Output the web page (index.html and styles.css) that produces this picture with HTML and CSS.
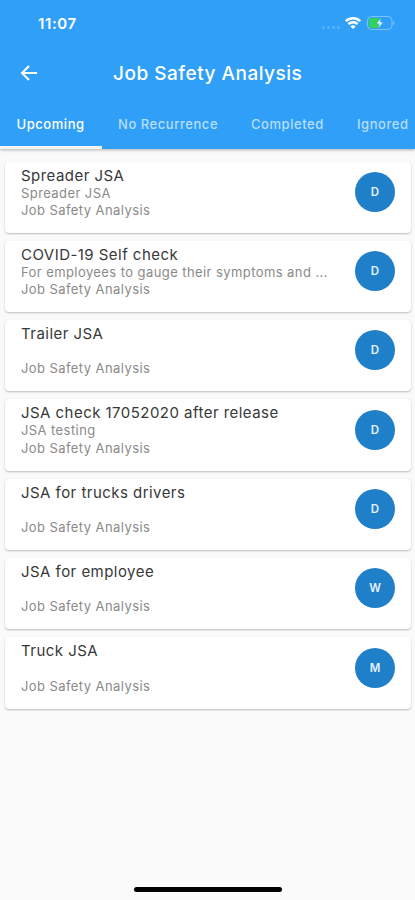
FILE: index.html
```html
<!DOCTYPE html>
<html lang="en">
<head>
<meta charset="utf-8">
<meta name="viewport" content="width=device-width, initial-scale=1">
<title>Job Safety Analysis</title>
<link rel="stylesheet" href="styles.css">
</head>
<body>
<div class="screen">
  <header class="header">
    <div class="status">
      <span class="time">11:07</span>
      <div class="status-icons">
        <div class="signal"><i></i><i></i><i></i><i></i></div>
        <svg class="wifi" width="16" height="12" viewBox="0 0 16 12" fill="none" stroke="#fff" stroke-width="2.4">
          <path d="M.8 4.2a10.2 10.2 0 0 1 14.4 0"/>
          <path d="M3.4 7.200a6.5 6.5 0 0 1 9.2 0"/>
          <path d="M8 12 5.400 9.500a3.4 3.4 0 0 1 5.200 0Z" fill="#fff" stroke="none"/>
        </svg>
        <svg class="battery" width="28" height="14" viewBox="0 0 28 14">
          <rect x=".5" y=".5" width="24.500" height="13" rx="4" fill="none" stroke="#7fc2f9" stroke-width="1"/>
          <path d="M26 5v4c1.900-.7 1.900-3.300 0-4Z" fill="#7fc2f9"/>
          <path d="M4.200 2H12v10H4.200A2.200 2.200 0 0 1 2 9.800V4.200A2.200 2.200 0 0 1 4.200 2Z" fill="#32d15b"/>
          <path d="M13.800 2.200 9.600 7.700h2.700l-.9 4.400 4.600-5.900h-2.900Z" fill="#fff" stroke="#2f9ff8" stroke-width=".4"/>
        </svg>
      </div>
    </div>
    <div class="appbar">
      <svg class="back" width="18" height="16" viewBox="0 0 18 16" fill="none" stroke="#fff" stroke-width="2">
        <path d="M17 8H2M9 1 2 8l7 7"/>
      </svg>
      <h1>Job Safety Analysis</h1>
    </div>
    <nav class="tabs">
      <span class="tab active">Upcoming</span>
      <span class="tab recurrence">No Recurrence</span>
      <span class="tab completed">Completed</span>
      <span class="tab ignored">Ignored</span>
    </nav>
  </header>
  <main class="list">
    <article class="card"><div class="text"><h2>Spreader JSA</h2><p>Spreader JSA</p><p>Job Safety Analysis</p></div><span class="avatar">D</span></article>
    <article class="card"><div class="text"><h2>COVID-19 Self check</h2><p>For employees to gauge their symptoms and ...</p><p>Job Safety Analysis</p></div><span class="avatar">D</span></article>
    <article class="card"><div class="text"><h2>Trailer JSA</h2><p></p><p>Job Safety Analysis</p></div><span class="avatar">D</span></article>
    <article class="card"><div class="text"><h2>JSA check 17052020 after release</h2><p>JSA testing</p><p>Job Safety Analysis</p></div><span class="avatar">D</span></article>
    <article class="card"><div class="text"><h2>JSA for trucks drivers</h2><p></p><p>Job Safety Analysis</p></div><span class="avatar">D</span></article>
    <article class="card"><div class="text"><h2>JSA for employee</h2><p></p><p>Job Safety Analysis</p></div><span class="avatar">W</span></article>
    <article class="card"><div class="text"><h2>Truck JSA</h2><p></p><p>Job Safety Analysis</p></div><span class="avatar">M</span></article>
  </main>
  <div class="home"></div>
</div>
</body>
</html>
```
FILE: styles.css
```css
* { box-sizing: border-box; }
body { margin: 0; font-family: Inter, "Liberation Sans", sans-serif; }
h1, h2, p { margin: 0; font-weight: 400; white-space: nowrap; }
.screen {
  width: 415px;
  height: 900px;
  display: flex;
  flex-direction: column;
  background: #fafafa;
  overflow: hidden;
}
.header {
  height: 149px;
  flex: none;
  display: flex;
  flex-direction: column;
  background: #2f9ff8;
  color: #fff;
  box-shadow: 0 1px 3px rgba(0, 0, 0, .3);
}
.status {
  height: 46px;
  padding: 0 20px 0 38px;
  display: flex;
  align-items: center;
  justify-content: space-between;
}
.time { font-size: 15px; font-weight: 600; letter-spacing: .6px; }
.status-icons { display: flex; align-items: center; }
.signal { display: flex; gap: 2px; margin: 8px 5px 0 0; }
.signal i { width: 3px; height: 3px; border-radius: 50%; background: #5cb3fa; }
.wifi { margin-right: 6px; }
.appbar {
  height: 54px;
  padding-left: 20px;
  display: flex;
  align-items: center;
}
.back { flex: none; }
h1 {
  margin-left: 75px;
  font-size: 19px;
  font-weight: 500;
  letter-spacing: .5px;
}
.tabs { flex: 1; display: flex; overflow: hidden; }
.tab {
  flex: none;
  padding: 0 16px;
  line-height: 48px;
  font-size: 13px;
  font-weight: 500;
  letter-spacing: .55px;
  color: #b9defd;
}
.active { width: 102px; padding-left: 16.500px; color: #fff; border-bottom: 3px solid #f2f4f6; }
.recurrence { width: 133px; }
.completed { width: 106px; }
.ignored { width: 84px; }
.list {
  padding: 12.500px 4px 0 5px;
  display: grid;
  grid-auto-rows: 71.330px;
  gap: 8px;
}
.card {
  display: flex;
  justify-content: space-between;
  padding: 5px 16px 0;
  border-radius: 4px;
  background: #fff;
  box-shadow: 0 1px 2px rgba(0, 0, 0, .25);
}
h2 {
  font-size: 15px;
  line-height: 18px;
  letter-spacing: .46px;
  color: #383838;
}
p {
  height: 17.300px;
  font-size: 13px;
  line-height: 17.300px;
  letter-spacing: .42px;
  color: #8a8a8a;
}
.avatar {
  width: 40px;
  height: 40px;
  margin-top: 5.300px;
  border-radius: 50%;
  background: #207fc9;
  color: #e4f2fd;
  font-size: 11.500px;
  font-weight: 600;
  line-height: 40px;
  text-align: center;
}
.home {
  width: 148px;
  height: 5px;
  margin: auto auto 8px 134px;
  flex: none;
  border-radius: 3px;
  background: #000;
}
```
